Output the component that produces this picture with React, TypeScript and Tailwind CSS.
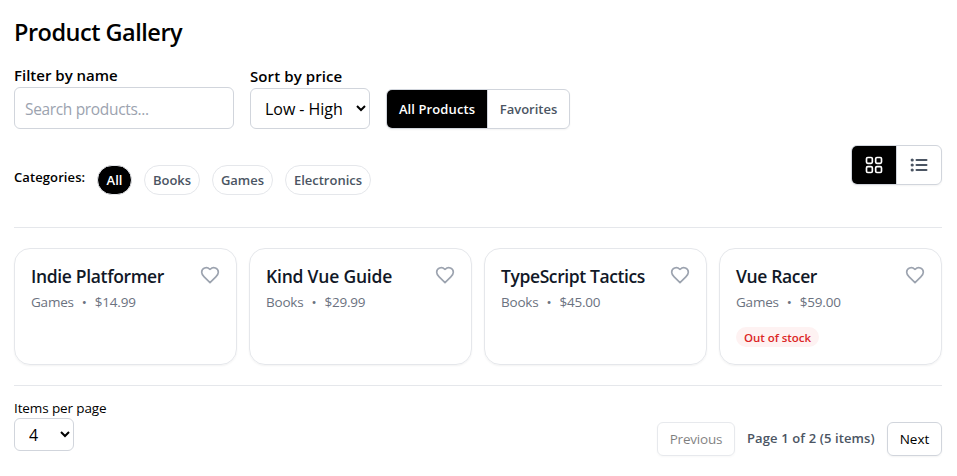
import type { ReactNode } from "react";

function Heart() {
  return (
    <svg viewBox="0 0 24 24" className="h-5 w-5 text-[#9ca3af]" fill="none" stroke="currentColor" strokeWidth="2" strokeLinecap="round" strokeLinejoin="round">
      <path d="M2 8.8a5.5 5.5 0 0 1 9.591-3.676.56.56 0 0 0 .818 0A5.49 5.49 0 0 1 22 8.8c0 2.29-1.5 4-3 5.5L12 21.2 5 14.3c-1.5-1.5-3-3.2-3-5.5z" />
    </svg>
  );
}

function Pill({ active, className, children }: { active?: boolean; className: string; children: ReactNode }) {
  return (
    <button
      className={`h-[30px] shrink-0 whitespace-nowrap rounded-full border border-gray-200 pt-px text-[13px] font-semibold ${
        active ? "bg-black text-white" : "bg-white text-[#4b5563]"
      } ${className}`}
    >
      {children}
    </button>
  );
}

const products = [
  { name: "Indie Platformer", category: "Games", price: "$14.99", out: false, tracking: "tracking-[-0.34px]" },
  { name: "Kind Vue Guide", category: "Books", price: "$29.99", out: false, tracking: "tracking-[-0.2px]" },
  { name: "TypeScript Tactics", category: "Books", price: "$45.00", out: false, tracking: "tracking-[-0.4px]" },
  { name: "Vue Racer", category: "Games", price: "$59.00", out: true, tracking: "tracking-[-0.36px]" },
];

export default function App() {
  return (
    <div className="h-[476px] w-[957px] overflow-hidden bg-white pl-[14px] pr-[15px] pt-4 font-['Open_Sans',sans-serif] text-black">
      <h1 className="h-8 text-[23.5px] leading-8 font-semibold tracking-[-0.5px] whitespace-nowrap">Product Gallery</h1>

      <div className="mt-[17px] flex h-16 items-end">
        <label className="mr-4 flex w-[220px] flex-col">
          <span className="h-[22px] text-[15px] leading-5 font-semibold">Filter by name</span>
          <input placeholder="Search products..." className="h-[42px] w-full rounded-md border border-gray-300 px-2.5 pt-px text-[15.5px] tracking-[-0.34px] placeholder:text-[#9ca3af]" />
        </label>
        <label className="mr-4 flex w-[120px] flex-col">
          <span className="h-[22px] text-[15px] leading-5 font-semibold tracking-[0.1px]">Sort by price</span>
          <select className="h-[41px] w-full rounded-md border border-gray-300 bg-white px-2.5 pt-px text-base tracking-[-0.05px]">
            <option>Low - High</option>
          </select>
        </label>
        <div className="flex h-10 w-[184px] overflow-hidden rounded-md border border-gray-300 text-[13px] font-semibold whitespace-nowrap shadow-xs">
          <button className="w-[100px] bg-black pt-px text-white tracking-[0.1px]">All Products</button>
          <button className="flex-1 border-l border-gray-300 pt-px text-[#4b5563]">Favorites</button>
        </div>
      </div>

      <div className="mt-4 flex justify-between">
        <div className="flex pt-5">
          <span className="mr-3 h-6 w-[71px] text-[13px] leading-6 font-semibold tracking-[0.1px] whitespace-nowrap">Categories:</span>
          <div className="flex gap-3">
            <Pill active className="w-[35px]">All</Pill>
            <Pill className="w-14">Books</Pill>
            <Pill className="w-[61px]">Games</Pill>
            <Pill className="w-[86px]">Electronics</Pill>
          </div>
        </div>
        <div className="flex h-10 w-[91px] overflow-hidden rounded-md border border-gray-300 shadow-xs">
          <button className="flex w-[44px] items-center justify-center bg-black text-white">
            <svg viewBox="0 0 24 24" className="h-5 w-5" fill="none" stroke="currentColor" strokeWidth="2">
              <rect x="3" y="3" width="7" height="7" rx="1.5" />
              <rect x="14" y="3" width="7" height="7" rx="1.5" />
              <rect x="3" y="14" width="7" height="7" rx="1.5" />
              <rect x="14" y="14" width="7" height="7" rx="1.5" />
            </svg>
          </button>
          <button className="flex flex-1 items-center justify-center border-l border-gray-300 text-[#4b5563]">
            <svg viewBox="0 0 20 20" className="h-5 w-5" fill="currentColor">
              <circle cx="3.2" cy="5" r="1.6" />
              <circle cx="3.2" cy="10" r="1.6" />
              <circle cx="3.2" cy="15" r="1.6" />
              <rect x="6.5" y="4" width="12" height="2" rx="1" />
              <rect x="6.5" y="9" width="12" height="2" rx="1" />
              <rect x="6.5" y="14" width="12" height="2" rx="1" />
            </svg>
          </button>
        </div>
      </div>

      <div className="mt-8 grid grid-cols-4 gap-3 border-y border-gray-200 py-5">
        {products.map((p) => (
          <article key={p.name} className="h-[117px] rounded-2xl border border-gray-200 p-4 shadow-xs">
            <div className="flex justify-between">
              <h2 className={`h-6 text-[17.5px] leading-[23px] font-semibold whitespace-nowrap text-[#111827] ${p.tracking}`}>{p.name}</h2>
              <Heart />
            </div>
            <p className="mt-[3px] flex h-5 gap-2 text-[13.5px] leading-[21px] tracking-[-0.2px] text-[#6b7280]">
              <span>{p.category}</span>
              <span>•</span>
              <span>{p.price}</span>
            </p>
            {p.out && (
              <span className="mt-[15px] flex h-5 w-[83px] items-center justify-center rounded-full bg-[#fef2f2] pt-px text-[11.5px] font-semibold tracking-[-0.05px] whitespace-nowrap text-[#dc2626]">Out of stock</span>
            )}
          </article>
        ))}
      </div>

      <div className="flex justify-between pt-3">
        <label className="flex flex-col">
          <span className="h-5 text-[13.5px] leading-[21px] tracking-[-0.12px]">Items per page</span>
          <select className="h-[33px] w-[60px] rounded-md border border-gray-300 bg-white px-2.5 pt-px text-base">
            <option>4</option>
          </select>
        </label>
        <div className="mt-6 flex h-[34px] items-center gap-3 text-[13.5px] whitespace-nowrap">
          <button className="h-[34px] w-[78px] rounded-md border border-gray-300 tracking-[-0.2px] opacity-50 shadow-xs">Previous</button>
          <span className="w-32 text-[13px] font-semibold tracking-[0.12px] text-[#4b5563]">Page 1 of 2 (5 items)</span>
          <button className="h-[34px] w-[55px] rounded-md border border-gray-300 shadow-xs">Next</button>
        </div>
      </div>
    </div>
  );
}
